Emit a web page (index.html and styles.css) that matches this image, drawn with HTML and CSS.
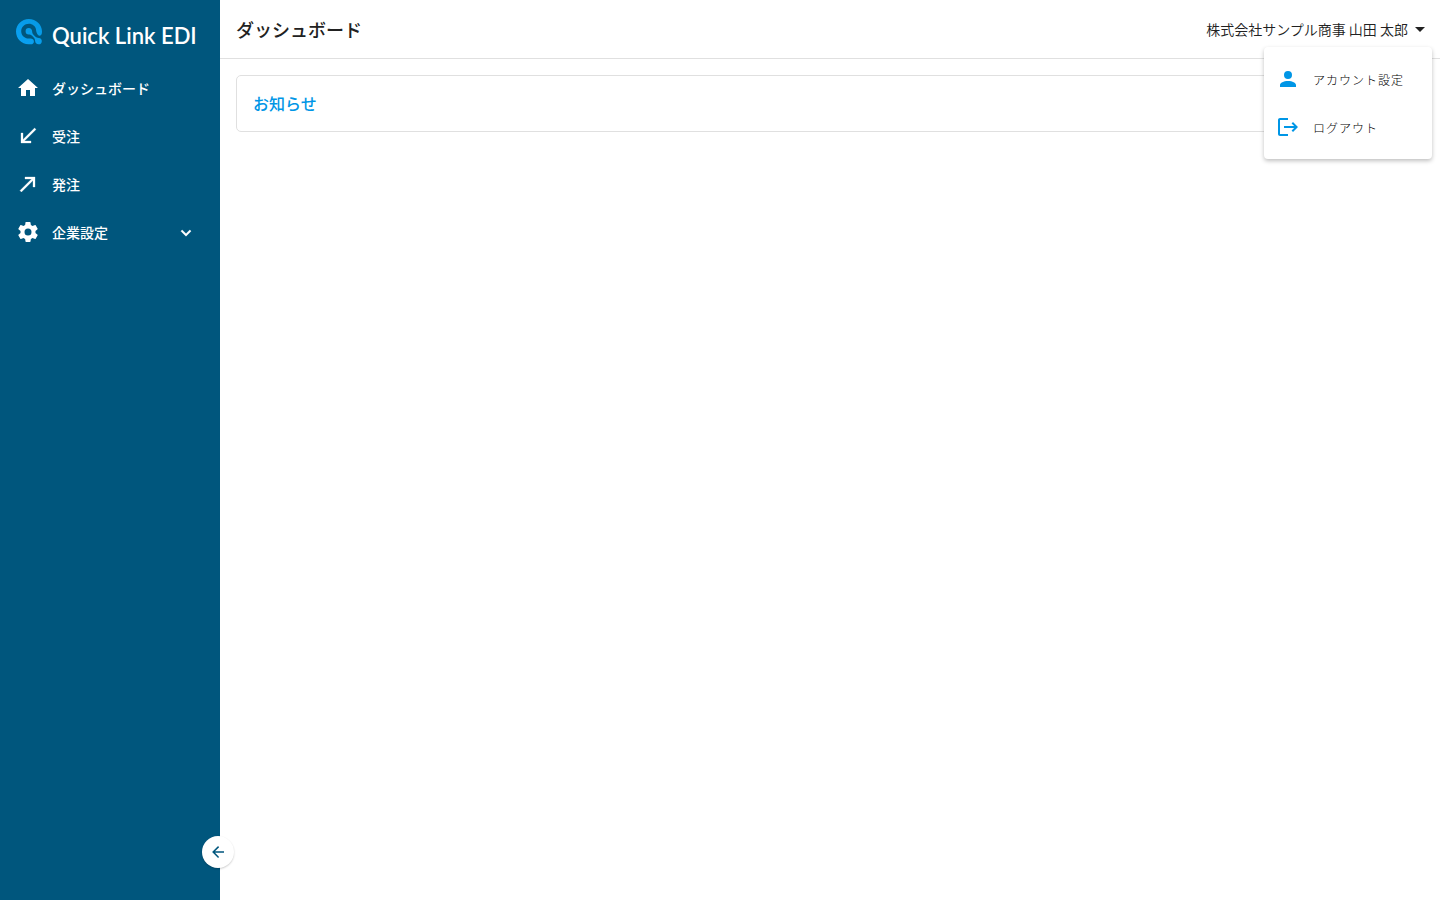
FILE: index.html
```html
<!DOCTYPE html>
<html lang="ja">
<head>
<meta charset="UTF-8">
<meta name="viewport" content="width=device-width, initial-scale=1.0">
<title>ダッシュボード</title>
<link rel="stylesheet" href="styles.css">
</head>
<body>
<aside class="sidebar">
  <a class="logo" href="#">
    <svg class="logo-mark" viewBox="0 0 26 26" aria-hidden="true">
      <defs>
        <linearGradient id="mark" x1="0" y1="1" x2="1" y2="0">
          <stop offset="0" stop-color="#0aa2f4"/>
          <stop offset="1" stop-color="#0598e2"/>
        </linearGradient>
      </defs>
      <path fill="url(#mark)" d="M12.800 0C5.700 0 0 5.600 0 12.600c0 7.200 5.500 12.700 12.600 12.700h2.200c1.900 0 3.100-1.200 3.100-2.900 0-1.800-1.500-2.800-3.600-2.800h-1.700c-3.900-.1-7.400-3-7.400-7.300 0-4.200 3.400-7.500 7.700-7.500 3.700 0 6.700 2.500 7.100 5.700.3 3.100 1.500 6.200 3.800 6.200 1.500 0 2.200-1.600 2.200-4.100C26 5.600 20.200 0 12.800 0z"/>
      <path fill="url(#mark)" d="M12.800 9a3.200 3.200 0 1 0 0 6.400c1.300 0 2.300.4 3.300 1.400l1.600 1.600c.9.900 1.300 1.900 1.400 3.400.1 2.100 1.400 3.500 3.400 3.500a3.200 3.200 0 0 0 .2-6.400c-1.500-.1-2.600-.6-3.500-1.500l-1.700-1.700c-.9-.9-1.300-1.900-1.400-3.400-.1-2-1.300-3.300-3.300-3.300z"/>
    </svg>
    <span class="logo-text">Quick Link EDI</span>
  </a>
  <nav class="nav">
    <a class="nav-item" href="#">
      <svg class="icon" viewBox="0 0 24 24" aria-hidden="true"><path d="M10 20v-6h4v6h5v-8h3L12 3 2 12h3v8h5z"/></svg>
      <span>ダッシュボード</span>
    </a>
    <a class="nav-item" href="#">
      <svg class="icon bold" viewBox="0 0 24 24" aria-hidden="true"><path d="M20 5.410L18.590 4 7 15.590V9H5v10h10v-2H8.410L20 5.410z"/></svg>
      <span>受注</span>
    </a>
    <a class="nav-item" href="#">
      <svg class="icon bold" viewBox="0 0 24 24" aria-hidden="true"><path d="M9 5v2h6.590L4 18.590 5.410 20 17 8.410V15h2V5H9z"/></svg>
      <span>発注</span>
    </a>
    <button class="nav-item" type="button" aria-expanded="false">
      <svg class="icon" viewBox="0 0 24 24" aria-hidden="true"><path d="M12 15.500A3.500 3.500 0 0 1 8.500 12 3.500 3.500 0 0 1 12 8.500a3.500 3.500 0 0 1 3.500 3.500 3.500 3.500 0 0 1-3.500 3.500m7.430-2.530c.04-.32.070-.64.070-.97s-.03-.66-.07-1l2.110-1.630c.19-.15.240-.42.120-.64l-2-3.460c-.12-.22-.39-.31-.61-.22l-2.490 1c-.52-.39-1.060-.73-1.690-.98l-.37-2.650A.506.506 0 0 0 14 2h-4c-.25 0-.46.180-.5.420l-.37 2.650c-.63.250-1.170.590-1.690.980l-2.490-1c-.22-.09-.49 0-.61.220l-2 3.460c-.13.220-.07.490.12.640L4.570 11c-.04.340-.07.670-.07 1s.03.650.07.970l-2.110 1.660c-.19.150-.25.420-.12.640l2 3.460c.12.220.39.300.61.220l2.490-1.010c.52.400 1.060.740 1.690.990l.37 2.650c.04.240.25.420.5.420h4c.25 0 .46-.18.500-.42l.37-2.650c.63-.26 1.170-.59 1.690-.99l2.490 1.010c.22.080.49 0 .61-.22l2-3.460c.12-.22.070-.49-.12-.64l-2.110-1.660z"/></svg>
      <span>企業設定</span>
      <svg class="chevron" viewBox="0 0 24 24" aria-hidden="true"><path d="M7.410 9.590 12 14.170l4.590-4.580L18 11l-6 6-6-6z"/></svg>
    </button>
  </nav>
  <button class="collapse" type="button" aria-label="メニューを閉じる">
    <svg viewBox="0 0 24 24" aria-hidden="true"><path d="M20 11v2H8l5.500 5.500-1.420 1.420L4.160 12l7.920-7.920L13.500 5.500 8 11z"/></svg>
  </button>
</aside>
<div class="page">
  <header class="header">
    <h1>ダッシュボード</h1>
    <div class="account">
      <button class="account-btn" type="button" aria-haspopup="true" aria-expanded="true">
        <span>株式会社サンプル商事 山田 太郎</span>
        <svg class="icon" viewBox="0 0 24 24" aria-hidden="true"><path d="m7 10 5 5 5-5z"/></svg>
      </button>
      <div class="menu">
        <a class="menu-item" href="#">
          <svg class="icon" viewBox="0 0 24 24" aria-hidden="true"><path d="M12 4a4 4 0 0 1 4 4 4 4 0 0 1-4 4 4 4 0 0 1-4-4 4 4 0 0 1 4-4m0 10c4.420 0 8 1.790 8 4v2H4v-2c0-2.210 3.580-4 8-4z"/></svg>
          <span>アカウント設定</span>
        </a>
        <a class="menu-item" href="#">
          <svg class="icon" viewBox="0 0 24 24" aria-hidden="true"><path d="m17 7-1.410 1.410L18.170 11H8v2h10.170l-2.580 2.580L17 17l5-5zM4 5h8V3H4c-1.100 0-2 .9-2 2v14c0 1.100.9 2 2 2h8v-2H4z"/></svg>
          <span>ログアウト</span>
        </a>
      </div>
    </div>
  </header>
  <main class="content">
    <section class="card">
      <h2>お知らせ</h2>
    </section>
  </main>
</div>
</body>
</html>
```

FILE: styles.css
```css
* { box-sizing:border-box; }
body { margin:0; display:flex; min-height:100vh; font-family:'Noto Sans CJK JP',sans-serif; font-size:14px; line-height:20px; color:#212121; background:#fff; }
a { color:inherit; text-decoration:none; }
button { font:inherit; color:inherit; background:none; border:none; padding:0; cursor:pointer; }
h1, h2 { margin:0; }
.icon { width:24px; height:24px; fill:currentColor; flex:none; }
.bold { stroke:currentColor; stroke-width:.3; }

/* sidebar */
.sidebar { position:relative; flex:none; width:220px; background:#00567d; color:#fff; }
.logo { display:flex; align-items:center; gap:10px; height:64px; padding:0 16px; }
.logo-mark { width:26px; height:26px; flex:none; }
.logo-text { font-family:Lato,sans-serif; font-size:22px; font-weight:600; line-height:24px; padding-top:8px; white-space:nowrap; }
.nav { display:flex; flex-direction:column; }
.nav-item { display:flex; align-items:center; gap:12px; height:48px; padding:0 24px 0 16px; font-weight:500; line-height:18px; text-align:left; }
.chevron { width:20px; height:20px; fill:currentColor; stroke:currentColor; stroke-width:.6; margin-left:auto; }
.collapse { position:absolute; right:-14px; bottom:32px; display:flex; align-items:center; justify-content:center; width:32px; height:32px; border-radius:50%; background:#fff; color:#00567d; box-shadow:0 1px 2px rgba(0,0,0,.2); }
.collapse svg { width:18px; height:18px; fill:currentColor; }

/* header */
.page { flex:1; min-width:0; }
.header { display:flex; align-items:center; justify-content:space-between; height:59px; padding:0 8px 0 16px; border-bottom:1px solid #e0e0e0; }
h1 { font-size:18px; font-weight:500; }
.account { position:relative; }
.account-btn { display:flex; align-items:center; height:36px; font-weight:350; line-height:18px; }
.menu { position:absolute; top:100%; right:0; width:168px; padding:8px 0; border-radius:4px; background:#fff; box-shadow:0 2px 4px rgba(0,0,0,.25); }
.menu-item { display:flex; align-items:center; gap:13px; height:48px; padding:0 12px; font-size:12px; font-weight:300; line-height:normal; letter-spacing:1px; color:#000; }
.menu-item .icon { fill:#0096e6; }

/* content */
.content { padding:16px; }
.card { border:1px solid #e0e0e0; border-radius:5px; padding:16px; }
h2 { font-size:16px; line-height:23px; font-weight:500; color:#0096e6; }
```
